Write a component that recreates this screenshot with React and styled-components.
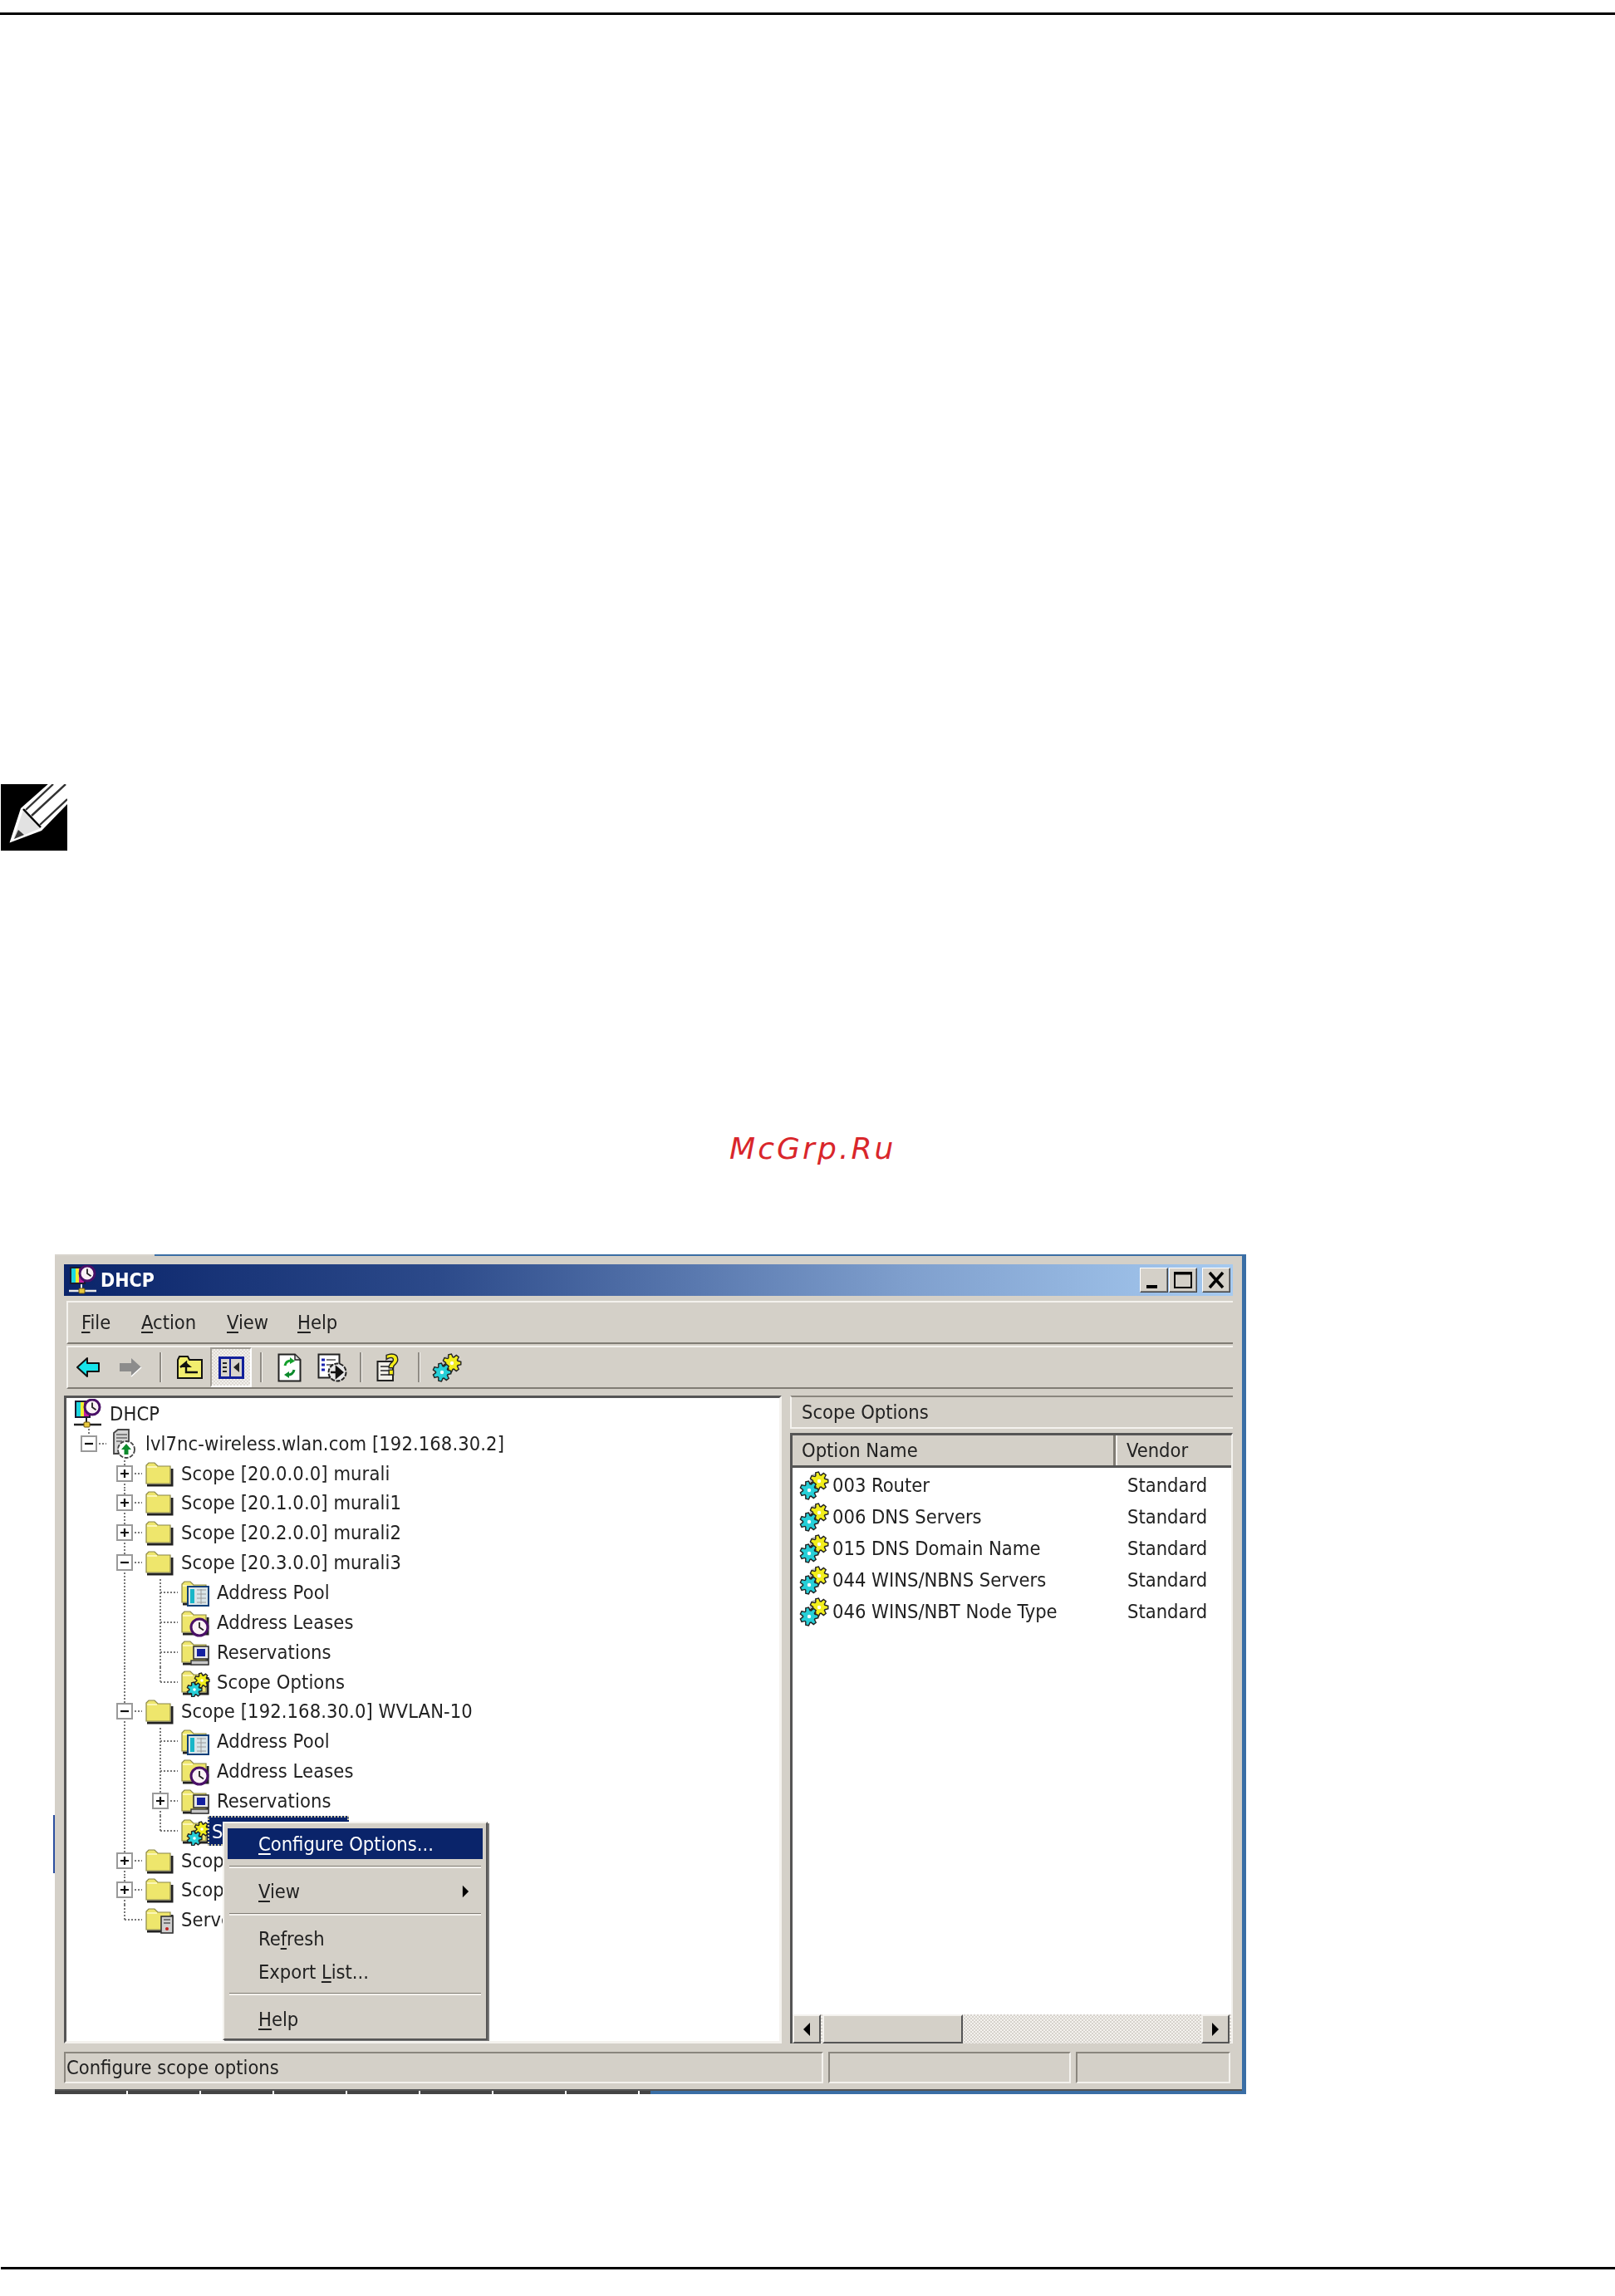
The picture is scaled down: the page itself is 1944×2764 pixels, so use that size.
import React from "react";
import styled, { createGlobalStyle, css } from "styled-components";

const Global = createGlobalStyle`
  html, body { margin: 0; padding: 0; background: #fff; }
  #root { width: 1944px; height: 2764px; overflow: hidden; }
`;

const FACE = "#d4d0c8";
const BLUE = "#3a6ea5";
const uiFont = css`
  font-family: "DejaVu Sans Condensed", "DejaVu Sans", sans-serif;
  font-stretch: condensed;
  font-size: 23.5px;
  color: #222;
`;

const Page = styled.div`
  display: flex;
  flex-direction: column;
  width: 1944px;
  height: 2764px;
  background: #fff;
`;
const TopRule = styled.div`
  height: 3px;
  margin-top: 15px;
  background: #000;
`;
const BottomRule = styled.div`
  height: 3px;
  margin: 208px 0 0 1px;
  background: #000;
`;
const NoteBox = styled.div`
  width: 80px;
  height: 80px;
  margin: 926px 0 0 1px;
  svg { display: block; }
`;
const Watermark = styled.div`
  height: 44px;
  line-height: 44px;
  margin: 337px 0 0 878px;
  font-family: "DejaVu Sans", sans-serif;
  font-style: oblique;
  font-size: 36px;
  letter-spacing: 3.1px;
  color: #d9262b;
`;

const Win = styled.div`
  position: relative;
  box-sizing: border-box;
  width: 1434px;
  height: 1011px;
  margin: 105px 0 0 66px;
  display: flex;
  flex-direction: column;
  background: ${FACE};
  border-right: 5px solid ${BLUE};
  ${uiFont};
  filter: blur(0.55px);
`;
const TopEdge = styled.div`
  height: 2px;
  flex: none;
  background: linear-gradient(90deg, #d8d4cc 0 120px, ${BLUE} 120px);
  margin-right: -5px;
`;
const LeftGlitch = styled.div`
  position: absolute;
  left: -2px;
  top: 675px;
  width: 2px;
  height: 70px;
  background: #2c4fa0;
`;
const Inner = styled.div`
  flex: 1;
  min-height: 0;
  display: flex;
  flex-direction: column;
  padding: 10px 11px 0;
`;
const TitleBar = styled.div`
  flex: none;
  height: 38px;
  display: flex;
  align-items: center;
  background: linear-gradient(90deg, #0a246a 0%, #2c4a8a 32%, #7f9fcd 72%, #a6caf0 100%);
  color: #fff;
  padding: 0 3px 0 5px;
`;
const TitleText = styled.span`
  margin-left: 3px;
  font-weight: bold;
  font-size: 23px;
  color: #fff;
  flex: 1;
`;
const WinButton = styled.div`
  box-sizing: border-box;
  width: 34px;
  height: 30px;
  margin-left: ${(p) => p.$ml || 0}px;
  background: ${FACE};
  border: 1px solid;
  border-color: #fff #404040 #404040 #fff;
  box-shadow: inset -1px -1px #808080;
  svg { display: block; }
`;
const Bar = styled.div`
  flex: none;
  box-sizing: border-box;
  height: ${(p) => p.$h}px;
  margin: ${(p) => p.$mt || 0}px 0 0 3px;
  border-top: 2px solid #f4f2ee;
  border-left: 2px solid #f4f2ee;
  border-bottom: 2px solid #807c74;
  display: flex;
  align-items: center;
`;
const MenuRow = styled(Bar)`
  display: grid;
  grid-template-columns: 72px 103px 85px auto;
  justify-content: start;
  padding-left: 16px;
`;
const ToolSlot = styled.div`
  flex: none;
  margin-left: ${(p) => p.$ml}px;
  width: ${(p) => p.$w}px;
  display: flex;
  align-items: center;
  justify-content: center;
`;
const ToolSep = styled.div`
  flex: none;
  width: 2px;
  height: 36px;
  margin-left: ${(p) => p.$ml}px;
  background: #8f8b84;
  box-shadow: 1px 0 #f4f2ee;
`;
const ActiveTool = styled.div`
  flex: none;
  box-sizing: border-box;
  width: 50px;
  height: 48px;
  margin-left: 8px;
  display: flex;
  align-items: center;
  justify-content: center;
  border: 2px solid;
  border-color: #a09c94 #fff #fff #a09c94;
  background: repeating-conic-gradient(#f2f0ec 0 25%, #dedad4 0 50%) 0 0 / 4px 4px;
`;
const Split = styled.div`
  flex: none;
  height: 780px;
  margin-top: 8px;
  display: grid;
  grid-template-columns: 864px 533px;
  column-gap: 10px;
`;
const Tree = styled.div`
  position: relative;
  box-sizing: border-box;
  height: 780px;
  background: #fff;
  border: 3px solid;
  border-color: #555 #f4f2ee #f4f2ee #555;
  padding: 1px 0 0 5px;
  overflow: hidden;
`;
const Row = styled.div`
  display: flex;
  align-items: center;
  height: 35.85px;
  white-space: nowrap;
`;
const dots = "repeating-linear-gradient(0deg, #777 0 2px, transparent 2px 4px)";
const dotsH = "repeating-linear-gradient(90deg, #777 0 2px, transparent 2px 4px)";
const Cell = styled.div`
  flex: none;
  width: 43px;
  height: 100%;
  display: flex;
  align-items: center;
  justify-content: center;
  background-repeat: no-repeat;
  ${(p) => p.$kind === "line" && css`
    background-image: ${dots};
    background-size: 2px 100%;
    background-position: center;
  `}
  ${(p) => p.$kind === "tee" && css`
    background-image: ${dots}, ${dotsH};
    background-size: 2px 100%, 50% 2px;
    background-position: center, right center;
  `}
  ${(p) => p.$kind === "elbow" && css`
    background-image: ${dots}, ${dotsH};
    background-size: 2px 50%, 50% 2px;
    background-position: center top, right center;
  `}
`;
const Expander = styled.div`
  box-sizing: border-box;
  width: 20px;
  height: 20px;
  background: #fff;
  border: 2px solid #9a9a9a;
  display: flex;
  align-items: center;
  justify-content: center;
  svg { display: block; }
`;
const NodeIcon = styled.div`
  flex: none;
  width: 36px;
  height: 36px;
  margin-left: 3px;
  svg { display: block; }
`;
const NodeLabel = styled.span`
  margin-left: 8px;
  letter-spacing: 0.1px;
`;
const SelectedLabel = styled.span`
  box-sizing: border-box;
  width: 170px;
  height: 36px;
  margin-left: -3px;
  padding-left: 3px;
  line-height: 34px;
  color: #fff;
  background: #0a246a;
  border: 2px dotted #c9c4a0;
`;
const CtxMenu = styled.div`
  position: absolute;
  left: 188px;
  top: 510px;
  box-sizing: border-box;
  width: 319px;
  height: 263px;
  padding: 6px 4px 0;
  background: ${FACE};
  border: 2px solid;
  border-color: #f4f2ee #555 #555 #f4f2ee;
  box-shadow: 2px 2px 0 #777;
  display: flex;
  flex-direction: column;
  z-index: 2;
`;
const CtxItem = styled.div`
  flex: none;
  height: ${(p) => (p.$h || 38)}px;
  display: flex;
  align-items: center;
  justify-content: space-between;
  padding: 0 16px 0 37px;
  color: ${(p) => (p.$on ? "#fff" : "#222")};
  background: ${(p) => (p.$on ? "#0a246a" : "transparent")};
  svg { display: block; }
`;
const CtxGroup = styled.div`
  display: flex;
  flex-direction: column;
  gap: 2px;
`;
const CtxSep = styled.div`
  flex: none;
  height: 1px;
  margin: ${(p) => p.$mt}px 2px ${(p) => p.$mb}px;
  background: #807c74;
  border-bottom: 2px solid #f4f2ee;
`;
const RightPane = styled.div`
  display: flex;
  flex-direction: column;
  min-width: 0;
`;
const PaneHead = styled.div`
  flex: none;
  box-sizing: border-box;
  height: 40px;
  display: flex;
  align-items: center;
  padding-left: 12px;
  border-top: 2px solid #8a867e;
  border-left: 2px solid #f4f2ee;
  border-bottom: 2px solid #f4f2ee;
`;
const ListFrame = styled.div`
  flex: 1;
  min-height: 0;
  margin-top: 5px;
  display: flex;
  flex-direction: column;
  background: #fff;
  border-top: 3px solid #555;
  border-left: 3px solid #555;
  border-right: 2px solid #f4f2ee;
`;
const ListHead = styled.div`
  flex: none;
  height: 36px;
  display: grid;
  grid-template-columns: 389px 1fr;
  background: ${FACE};
  border-bottom: 3px solid #555;
`;
const HeadCell = styled.div`
  display: flex;
  align-items: center;
  padding-left: ${(p) => p.$pl}px;
  border-left: ${(p) => (p.$sep ? "2px solid #f4f2ee" : "0")};
  border-right: ${(p) => (p.$end ? "3px solid #807c74" : "0")};
`;
const ListBody = styled.div`
  flex: 1;
  min-height: 0;
  padding-top: 2px;
  display: flex;
  flex-direction: column;
`;
const ListRow = styled.div`
  flex: none;
  height: 38px;
  display: grid;
  grid-template-columns: 403px 1fr;
  align-items: center;
  white-space: nowrap;
`;
const OptName = styled.div`
  display: flex;
  align-items: center;
  padding-left: 8px;
  svg { display: block; flex: none; margin-right: 3px; }
`;
const ScrollBar = styled.div`
  flex: none;
  height: 35px;
  display: flex;
  background: repeating-conic-gradient(#d6d2cc 0 25%, #f4f2ee 0 50%) 0 0 / 4px 4px;
`;
const ScrollPart = styled.div`
  flex: none;
  box-sizing: border-box;
  width: ${(p) => p.$w}px;
  margin-left: ${(p) => p.$ml || 0}px;
  background: ${FACE};
  border: 2px solid;
  border-color: #f4f2ee #555 #555 #f4f2ee;
  display: flex;
  align-items: center;
  justify-content: center;
  svg { display: block; }
`;
const StatusBar = styled.div`
  flex: none;
  height: 38px;
  margin: 10px 2px 0 0;
  display: grid;
  grid-template-columns: 914px 292px 186px;
  column-gap: 6px;
`;
const StatusCell = styled.div`
  box-sizing: border-box;
  display: flex;
  align-items: center;
  padding-left: 1px;
  border: 2px solid;
  border-color: #8a867e #f4f2ee #f4f2ee #8a867e;
  padding-left: ${(p) => p.$pl || 0}px;
`;
const BottomEdge = styled.div`
  flex: none;
  margin-top: auto;
  height: 4px;
  margin-right: -5px;
  background:
    linear-gradient(90deg, transparent 0 717px, ${BLUE} 717px),
    repeating-linear-gradient(90deg, #444 0 86px, #fff 86px 88px);
`;
const BottomDark = styled.div`
  flex: none;
  height: 2px;
  background: #555;
`;

const Und = styled.span`
  text-decoration: underline;
  text-underline-offset: 3px;
`;

/* ---- drawings ---- */
const gearPath = (cx, cy, ro, ri, n) => {
  const pts = [];
  for (let i = 0; i < n; i++) {
    const a = (i / n) * Math.PI * 2;
    const s = Math.PI / n / 1.6;
    [[ri, -s * 1.3], [ro, -s * 0.6], [ro, s * 0.6], [ri, s * 1.3]].forEach(([r, d]) =>
      pts.push(`${(cx + r * Math.cos(a + d)).toFixed(1)} ${(cy + r * Math.sin(a + d)).toFixed(1)}`)
    );
  }
  return "M" + pts.join("L") + "Z";
};
const Gear = ({ cx, cy, r, fill }) => (
  <g>
    <path d={gearPath(cx, cy, r, r * 0.68, 7)} fill={fill} stroke="#222" strokeWidth="1.4" />
    <circle cx={cx} cy={cy} r={r * 0.2} fill="#fff" />
  </g>
);
const GearsGlyph = ({ size = 37, h = 36 }) => (
  <svg width={size} height={h} viewBox="0 0 37 36">
    <path d="M13 17 L16 6 L20 5" stroke="#bbb" strokeWidth="2.5" fill="none" />
    <Gear cx={24} cy={13} r={11} fill="#f2ee1c" />
    <Gear cx={12} cy={24} r={11} fill="#26cfd8" />
  </svg>
);
const FolderShape = () => (
  <g>
    <path d="M3 30 H33 V10" stroke="#222" strokeWidth="3" fill="none" />
    <path d="M2 28 V6 L5 3 H12 L16 7 H31 V28 Z" fill="#eee66c" stroke="#8a8648" strokeWidth="1.2" />
    <path d="M3 8 H15" stroke="#fffbd0" strokeWidth="1.5" />
  </g>
);
const FolderIcon = ({ children }) => (
  <svg width="36" height="36" viewBox="0 0 36 36">
    <g transform="translate(0 2)"><FolderShape /></g>
    {children}
  </svg>
);
const PoolIcon = () => (
  <FolderIcon>
    <rect x="9" y="11" width="25" height="23" fill="#d8e4e8" stroke="#12407a" strokeWidth="2" />
    <rect x="12" y="14" width="5" height="17" fill="#18b6c8" />
    <path d="M20 15H31M20 20H31M20 25H31M20 30H31M25 14V32" stroke="#9a9a9a" />
  </FolderIcon>
);
const ClockGlyph = ({ cx, cy, r }) => (
  <g>
    <circle cx={cx} cy={cy} r={r} fill="#fbf2f6" stroke="#4a1068" strokeWidth="3" />
    <path d={`M${cx} ${cy - r * 0.6} V${cy} L${cx + r * 0.5} ${cy + r * 0.35}`} stroke="#222" strokeWidth="1.8" fill="none" />
  </g>
);
const LeasesIcon = () => (
  <FolderIcon>
    <ClockGlyph cx={23} cy={24} r={10} />
  </FolderIcon>
);
const ReservationsIcon = () => (
  <FolderIcon>
    <rect x="16" y="11" width="18" height="15" fill="#e8e8e8" stroke="#333" strokeWidth="1.6" />
    <rect x="20" y="14" width="10" height="9" fill="#1420a0" />
    <rect x="13" y="28" width="21" height="5" fill="#c8c8c8" stroke="#333" strokeWidth="1.4" />
  </FolderIcon>
);
const OptionsIcon = () => (
  <FolderIcon>
    <Gear cx={26} cy={16} r={9} fill="#f2ee1c" />
    <Gear cx={17} cy={27} r={9} fill="#26cfd8" />
  </FolderIcon>
);
const ServerOptIcon = () => (
  <FolderIcon>
    <rect x="20" y="14" width="14" height="20" fill="#d0d0d0" stroke="#333" strokeWidth="1.6" />
    <path d="M23 18H31M23 22H31" stroke="#555" strokeWidth="1.5" />
    <circle cx="27" cy="29" r="2" fill="#c02020" />
  </FolderIcon>
);
const DhcpIcon = ({ bar = "#222" }) => (
  <svg width="36" height="36" viewBox="0 0 36 36">
    <rect x="2" y="2" width="19" height="21" fill="#1a1a30" />
    <rect x="4" y="4" width="5" height="17" fill="#1ed6e0" />
    <rect x="9" y="4" width="4" height="17" fill="#f2ee30" />
    <rect x="13" y="4" width="6" height="17" fill="#c020a0" />
    <ClockGlyph cx={23} cy={10} r={9} />
    <path d="M1 31 H34" stroke={bar} strokeWidth="2.5" />
    <path d="M16 23 V29" stroke={bar} strokeWidth="2" />
    <rect x="13" y="28" width="7" height="6" rx="1" fill="#e8c83c" stroke="#6a5410" />
  </svg>
);
const ServerIcon = () => (
  <svg width="36" height="36" viewBox="0 0 36 36">
    <path d="M6 5 L11 1 H24 V30 H6 Z" fill="#d4d4d4" stroke="#444" strokeWidth="1.8" />
    <path d="M9 7H22M9 11H22M9 15H16" stroke="#666" strokeWidth="1.6" />
    <circle cx="21" cy="25" r="10" fill="#fff" stroke="#444" strokeWidth="1.8" strokeDasharray="5 1.5" />
    <path d="M21 18 L27 25 H23.5 V31 H18.5 V25 H15 Z" fill="#0c8a2c" />
  </svg>
);
const Plus = () => (
  <svg width="14" height="14" viewBox="0 0 14 14"><path d="M2 7H12M7 2V12" stroke="#111" strokeWidth="2.2" /></svg>
);
const Minus = () => (
  <svg width="14" height="14" viewBox="0 0 14 14"><path d="M2 7H12" stroke="#111" strokeWidth="2.2" /></svg>
);
const BackIcon = () => (
  <svg width="28" height="26" viewBox="0 0 28 26">
    <path d="M1 13 L13 2 V8 H27 V18 H13 V24 Z" fill="#16e4ea" stroke="#111" strokeWidth="2" strokeLinejoin="round" />
  </svg>
);
const ForwardIcon = () => (
  <svg width="28" height="26" viewBox="0 0 28 26">
    <path d="M27 13 L15 2 V8 H1 V18 H15 V24 Z" fill="#8c8c8c" />
    <path d="M15 24 L27 13" stroke="#fff" strokeWidth="1.5" />
  </svg>
);
const UpIcon = () => (
  <svg width="33" height="30" viewBox="0 0 33 30">
    <path d="M2 28 V6 L4 2 H14 L16 6 H31 V28 Z" fill="#f2ee6e" stroke="#111" strokeWidth="2" />
    <path d="M5 15 L12 9 V13 V21 H26" fill="none" stroke="#111" strokeWidth="2.4" />
    <path d="M6 15 H19 L12 9 Z" fill="#111" />
  </svg>
);
const PaneIcon = () => (
  <svg width="31" height="27" viewBox="0 0 31 27">
    <rect x="1.5" y="1.5" width="28" height="24" fill="#d8d4cc" stroke="#12209a" strokeWidth="3" />
    <path d="M14 2V25" stroke="#12209a" strokeWidth="2" />
    <path d="M5 8H10M5 13H10M5 18H10" stroke="#222" strokeWidth="2.2" />
    <path d="M18 13 L25 7 V19 Z" fill="#222" />
  </svg>
);
const RefreshIcon = () => (
  <svg width="29" height="35" viewBox="0 0 29 35">
    <path d="M1.5 1.5 H21 L27.5 8 V33.5 H1.5 Z" fill="#fff" stroke="#222" strokeWidth="2" />
    <path d="M21 2 V8 H27" fill="#ddd" stroke="#222" strokeWidth="1.4" />
    <path d="M9 15 A7 7 0 0 1 17 9" fill="none" stroke="#14a02c" strokeWidth="3" />
    <path d="M15 5 L21 9.5 L15 13 Z" fill="#14a02c" />
    <path d="M20 20 A7 7 0 0 1 12 26" fill="none" stroke="#0c8a2c" strokeWidth="3" />
    <path d="M14 22 L8 26 L14 30 Z" fill="#0c8a2c" />
  </svg>
);
const ExportIcon = () => (
  <svg width="36" height="35" viewBox="0 0 36 35">
    <rect x="1.5" y="1.5" width="25" height="28" fill="#fff" stroke="#222" strokeWidth="2" />
    <path d="M5 8H9M5 14H9M5 20H9" stroke="#1a22b0" strokeWidth="3" />
    <path d="M11 8H22M11 14H20" stroke="#777" strokeWidth="2" />
    <circle cx="24" cy="23" r="10.5" fill="#e8e8e8" stroke="#222" strokeWidth="2" strokeDasharray="5 1.5" />
    <path d="M16 23 H25 M23 17 L30 23 L23 29 Z" stroke="#111" strokeWidth="2.6" fill="#111" />
  </svg>
);
const HelpIcon = () => (
  <svg width="32" height="35" viewBox="0 0 32 35">
    <path d="M1.5 10 H20 V33 H1.5 Z" fill="#f0efe8" stroke="#222" strokeWidth="2" />
    <path d="M5 16H16M5 21H16M5 26H16" stroke="#555" strokeWidth="1.8" />
    <text x="10" y="26" fontFamily="DejaVu Sans" fontWeight="bold" fontSize="34" fill="#f4ec1a" stroke="#222" strokeWidth="1.4">?</text>
  </svg>
);
const TriLeft = () => <svg width="10" height="16" viewBox="0 0 10 16"><path d="M9 0 L1 8 L9 16 Z" fill="#000" /></svg>;
const TriRight = ({ w = 10, h = 16 }) => <svg width={w} height={h} viewBox="0 0 10 16"><path d="M1 0 L9 8 L1 16 Z" fill="#000" /></svg>;
const NoteIcon = () => (
  <svg width="80" height="80" viewBox="0 0 80 80">
    <rect width="80" height="80" fill="#000" />
    <path d="M24 29 L59 -2 H82 V22 L49 56 L10.5 70.5 Z" fill="#fff" />
    <path d="M27 31 L48 53 L15 66.5 Z" fill="#e2e2e2" />
    <path d="M16 66 L21 55 L28 61 Z" fill="#3a3a3a" />
    <path d="M27 30 L48 52" stroke="#000" strokeWidth="2.5" />
    <path d="M30 31 L63 0 M37 38 L78 0 M47 49 L80 18" stroke="#333" strokeWidth="2.4" />
    <path d="M48 55 L80 26" stroke="#000" strokeWidth="0" />
  </svg>
);

const scopes = [
  ["Address Pool", PoolIcon],
  ["Address Leases", LeasesIcon],
  ["Reservations", ReservationsIcon],
];
const options = ["003 Router", "006 DNS Servers", "015 DNS Domain Name", "044 WINS/NBNS Servers", "046 WINS/NBT Node Type"];

const Node = ({ cells = [], icon: Icon, exp, children }) => (
  <Row>
    {cells.map((k, i) => (
      <Cell key={i} $kind={k}>
        {i === cells.length - 1 && exp && <Expander>{exp === "+" ? <Plus /> : <Minus />}</Expander>}
      </Cell>
    ))}
    <NodeIcon><Icon /></NodeIcon>
    {children}
  </Row>
);
const L2 = ["none", "tee"];
const L3 = ["none", "line", "tee"];

export default function App() {
  return (
    <Page>
      <Global />
      <TopRule />
      <NoteBox><NoteIcon /></NoteBox>
      <Watermark>McGrp.Ru</Watermark>
      <Win>
        <TopEdge />
        <LeftGlitch />
        <Inner>
          <TitleBar>
            <DhcpIcon bar="#e8e8e8" />
            <TitleText>DHCP</TitleText>
            <WinButton>
              <svg width="32" height="28" viewBox="0 0 32 28"><path d="M7 22H20" stroke="#000" strokeWidth="4" /></svg>
            </WinButton>
            <WinButton $ml={1}>
              <svg width="32" height="28" viewBox="0 0 32 28"><path d="M6 5H26V23H6Z" fill="none" stroke="#000" strokeWidth="2" /><path d="M6 6H26" stroke="#000" strokeWidth="3" /></svg>
            </WinButton>
            <WinButton $ml={6}>
              <svg width="32" height="28" viewBox="0 0 32 28"><path d="M8 5L24 23M24 5L8 23" stroke="#000" strokeWidth="3.5" /></svg>
            </WinButton>
          </TitleBar>
          <MenuRow $h={52} $mt={6}>
            <span><Und>F</Und>ile</span>
            <span><Und>A</Und>ction</span>
            <span><Und>V</Und>iew</span>
            <span><Und>H</Und>elp</span>
          </MenuRow>
          <Bar $h={52} $mt={2}>
            <ToolSlot $ml={10} $w={28}><BackIcon /></ToolSlot>
            <ToolSlot $ml={23} $w={28}><ForwardIcon /></ToolSlot>
            <ToolSep $ml={21} />
            <ToolSlot $ml={18} $w={33}><UpIcon /></ToolSlot>
            <ActiveTool><PaneIcon /></ActiveTool>
            <ToolSep $ml={10} />
            <ToolSlot $ml={19} $w={29}><RefreshIcon /></ToolSlot>
            <ToolSlot $ml={19} $w={36}><ExportIcon /></ToolSlot>
            <ToolSep $ml={15} />
            <ToolSlot $ml={18} $w={32}><HelpIcon /></ToolSlot>
            <ToolSep $ml={18} />
            <ToolSlot $ml={15} $w={37}><GearsGlyph /></ToolSlot>
          </Bar>
          <Split>
            <Tree>
              <Node icon={DhcpIcon}><NodeLabel>DHCP</NodeLabel></Node>
              <Node cells={["elbow"]} exp="-" icon={ServerIcon}><NodeLabel>lvl7nc-wireless.wlan.com [192.168.30.2]</NodeLabel></Node>
              <Node cells={L2} exp="+" icon={FolderIcon}><NodeLabel>Scope [20.0.0.0] murali</NodeLabel></Node>
              <Node cells={L2} exp="+" icon={FolderIcon}><NodeLabel>Scope [20.1.0.0] murali1</NodeLabel></Node>
              <Node cells={L2} exp="+" icon={FolderIcon}><NodeLabel>Scope [20.2.0.0] murali2</NodeLabel></Node>
              <Node cells={L2} exp="-" icon={FolderIcon}><NodeLabel>Scope [20.3.0.0] murali3</NodeLabel></Node>
              {scopes.map(([t, I]) => (
                <Node key={t} cells={L3} icon={I}><NodeLabel>{t}</NodeLabel></Node>
              ))}
              <Node cells={["none", "line", "elbow"]} icon={OptionsIcon}><NodeLabel>Scope Options</NodeLabel></Node>
              <Node cells={L2} exp="-" icon={FolderIcon}><NodeLabel>Scope [192.168.30.0] WVLAN-10</NodeLabel></Node>
              {scopes.map(([t, I], i) => (
                <Node key={t} cells={L3} exp={i === 2 ? "+" : undefined} icon={I}><NodeLabel>{t}</NodeLabel></Node>
              ))}
              <Node cells={["none", "line", "elbow"]} icon={OptionsIcon}><SelectedLabel>Scope Options</SelectedLabel></Node>
              <Node cells={L2} exp="+" icon={FolderIcon}><NodeLabel>Scope [192.168.40.0] WVLAN-20</NodeLabel></Node>
              <Node cells={L2} exp="+" icon={FolderIcon}><NodeLabel>Scope [192.168.50.0] WVLAN-30</NodeLabel></Node>
              <Node cells={["none", "elbow"]} icon={ServerOptIcon}><NodeLabel>Server Options</NodeLabel></Node>
              <CtxMenu>
                <CtxItem $on $h={37}><span style={{ color: "#fff" }}><Und>C</Und>onfigure Options...</span></CtxItem>
                <CtxSep $mt={8} $mb={9} />
                <CtxItem><span><Und>V</Und>iew</span><TriRight w={9} h={16} /></CtxItem>
                <CtxSep $mt={7} $mb={9} />
                <CtxGroup>
                  <CtxItem><span>Re<Und>f</Und>resh</span></CtxItem>
                  <CtxItem><span>Export <Und>L</Und>ist...</span></CtxItem>
                </CtxGroup>
                <CtxSep $mt={6} $mb={10} />
                <CtxItem><span><Und>H</Und>elp</span></CtxItem>
              </CtxMenu>
            </Tree>
            <RightPane>
              <PaneHead>Scope Options</PaneHead>
              <ListFrame>
                <ListHead>
                  <HeadCell $pl={11} $end>Option Name</HeadCell>
                  <HeadCell $pl={11} $sep>Vendor</HeadCell>
                </ListHead>
                <ListBody>
                  {options.map((o) => (
                    <ListRow key={o}>
                      <OptName><GearsGlyph /><span>{o}</span></OptName>
                      <span>Standard</span>
                    </ListRow>
                  ))}
                </ListBody>
                <ScrollBar>
                  <ScrollPart $w={34}><TriLeft /></ScrollPart>
                  <ScrollPart $w={169} $ml={2} />
                  <ScrollPart $w={34} $ml={287}><TriRight /></ScrollPart>
                </ScrollBar>
              </ListFrame>
            </RightPane>
          </Split>
          <StatusBar>
            <StatusCell $pl={1}>Configure scope options</StatusCell>
            <StatusCell />
            <StatusCell />
          </StatusBar>
        </Inner>
        <BottomDark />
        <BottomEdge />
      </Win>
      <BottomRule />
    </Page>
  );
}
